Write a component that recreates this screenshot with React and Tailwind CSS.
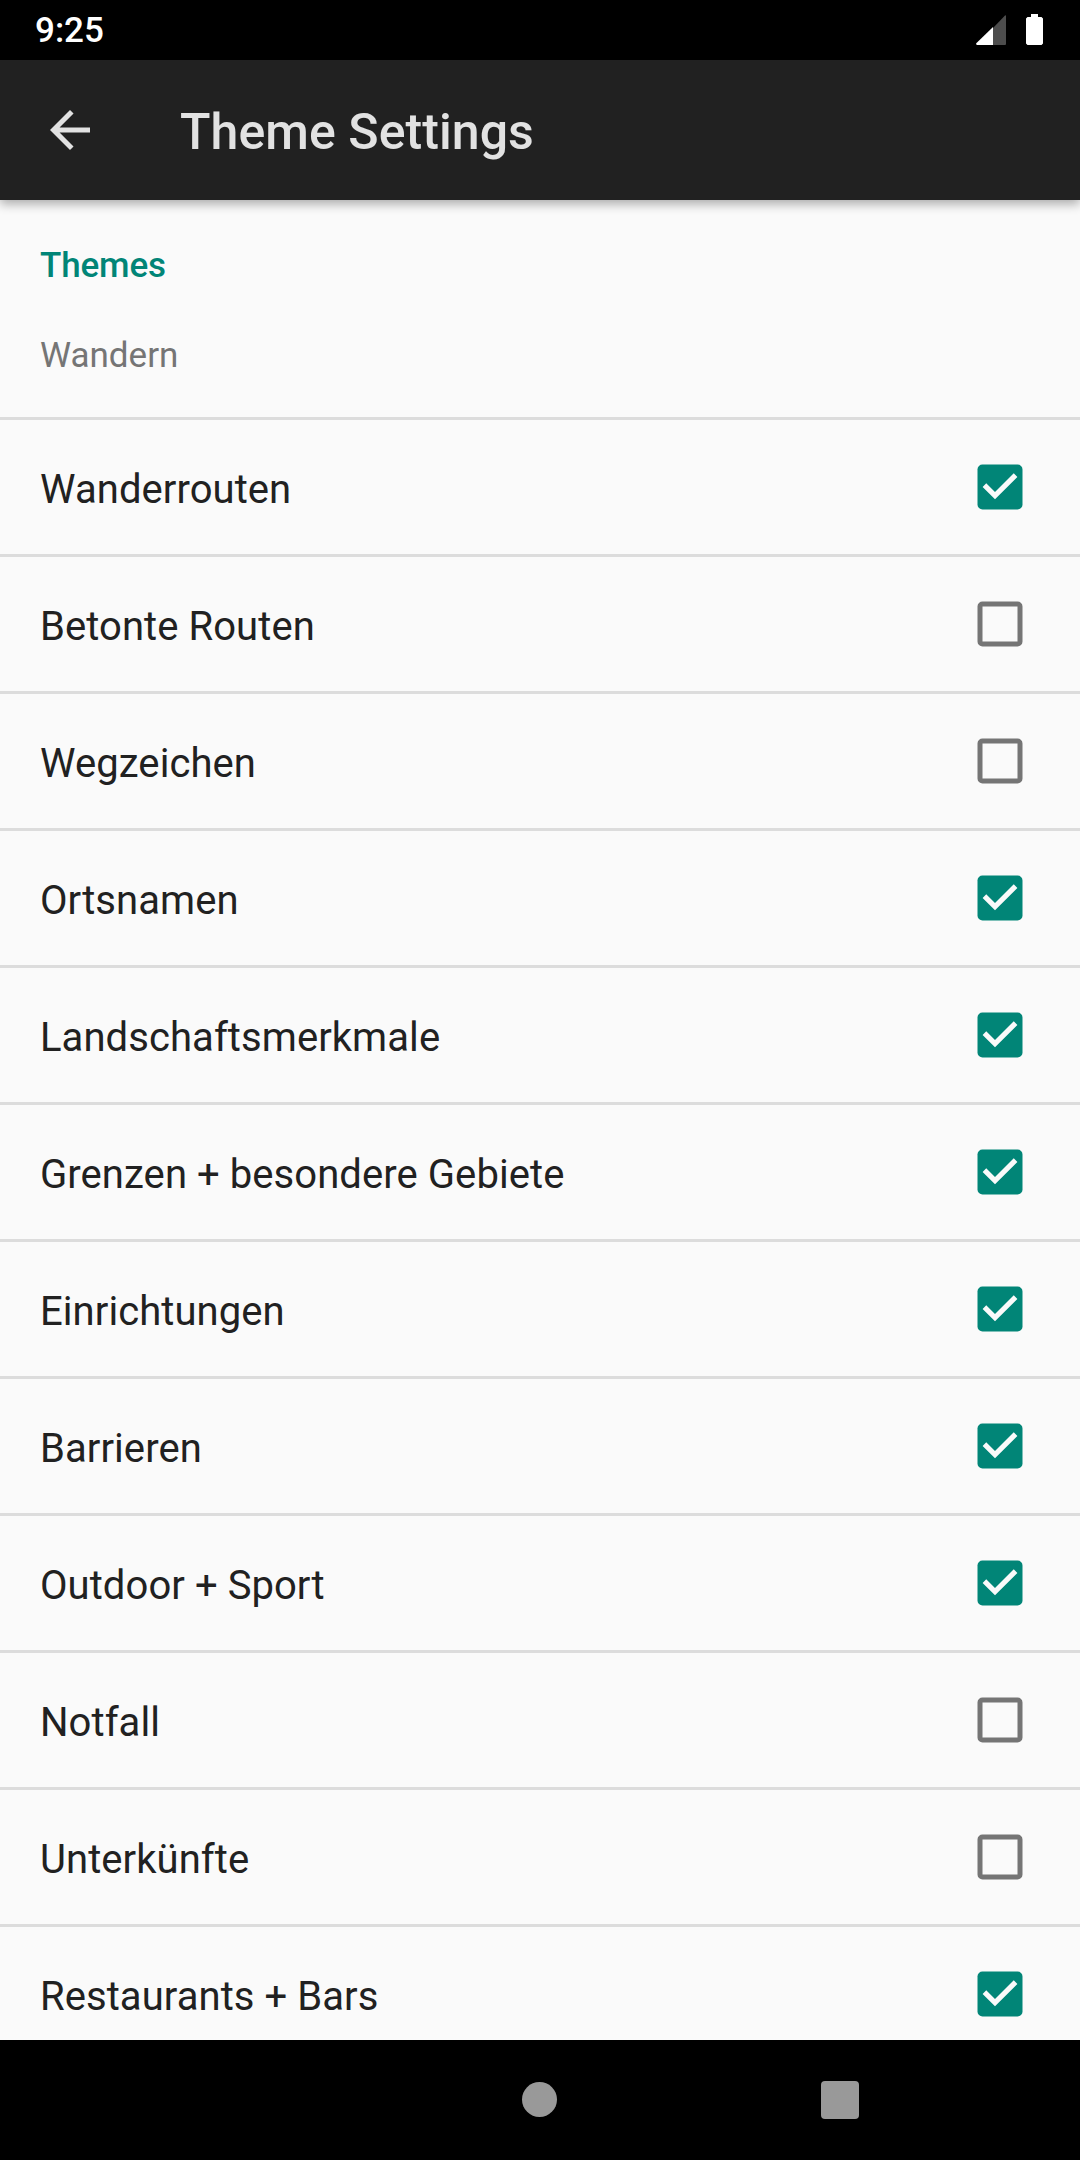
const items = [
  ["Wanderrouten", true],
  ["Betonte Routen", false],
  ["Wegzeichen", false],
  ["Ortsnamen", true],
  ["Landschaftsmerkmale", true],
  ["Grenzen + besondere Gebiete", true],
  ["Einrichtungen", true],
  ["Barrieren", true],
  ["Outdoor + Sport", true],
  ["Notfall", false],
  ["Unterkünfte", false],
  ["Restaurants + Bars", true],
];

function Checkbox({ checked }) {
  return (
    <svg viewBox="0 0 24 24" className="size-[60px] shrink-0" role="checkbox" aria-checked={checked}>
      {checked ? (
        <>
          <rect x="3" y="3" width="18" height="18" rx="2" fill="#018577" />
          <path d="M10 16.900 5.050 11.950l1.450-1.450L10 14l7.500-7.500L18.950 7.950z" fill="#fafafa" />
        </>
      ) : (
        <rect x="4" y="4" width="16" height="16" rx="1" fill="none" stroke="#757575" strokeWidth="2" />
      )}
    </svg>
  );
}

function StatusBar() {
  return (
    <div className="flex h-[60px] shrink-0 items-center justify-between bg-black pl-[35px] pr-[37px] text-white">
      <span className="pt-0.5 text-[35px] font-medium leading-[60px]">9:25</span>
      <div className="flex h-full items-start gap-5 pt-3.5">
        <svg viewBox="0 0 30 31" className="h-[31px] w-[30px]">
          <path d="M17 14 29 1.5q1-.8 1 .5v28q0 1-1 1H17z" fill="#4d4d4d" />
          <path d="M17 13v18H1q-1.5-.8-.5-2z" fill="#fff" />
        </svg>
        <svg viewBox="0 0 17 31" className="h-[31px] w-[17px]">
          <path d="M5 0h7v3h3.5L17 4.500v25L15.500 31h-14L0 29.500v-25L1.500 3H5z" fill="#fff" />
        </svg>
      </div>
    </div>
  );
}

export default function App() {
  return (
    <div className="flex h-[2160px] w-[1080px] flex-col overflow-hidden bg-[#fafafa] font-['Roboto',sans-serif]">
      <StatusBar />
      <header className="z-10 flex h-[140px] shrink-0 items-center gap-20 bg-[#212121] pl-10 text-[#e2e2e2] shadow-[0_4px_10px_rgba(0,0,0,0.32)]">
        <svg viewBox="0 0 24 24" className="size-[60px]">
          <path d="M20 11H7.830l5.590-5.590L12 4l-8 8 8 8 1.410-1.410L7.830 13H20z" fill="currentColor" />
        </svg>
        <h1 className="pt-1 text-[50px] font-medium leading-[60px] tracking-[0.08px]">Theme Settings</h1>
      </header>
      <main className="flex min-h-0 flex-1 flex-col overflow-hidden">
        <section className="h-[220px] shrink-0 border-b-3 border-[#dcdcdc] px-10 pt-[46px]">
          <h2 className="text-[35px] font-medium leading-10 tracking-[-0.15px] text-[#018577]">Themes</h2>
          <p className="mt-[50px] text-[35px] leading-10 text-[#757575]">Wandern</p>
        </section>
        {items.map(([label, checked]) => (
          <div
            key={label}
            className="flex h-[137px] shrink-0 items-center justify-between border-b-3 border-[#dcdcdc] pl-10 pr-[50px]"
          >
            <span className="pt-1.5 text-[40px] leading-[50px] tracking-[0.07px] text-[#212121]">{label}</span>
            <Checkbox checked={checked} />
          </div>
        ))}
      </main>
      <nav className="grid h-[120px] shrink-0 grid-cols-[522px_35px_264px_38px_1fr] items-center bg-black">
        <span />
        <span className="mb-px size-[35px] rounded-full bg-[#999]" />
        <span />
        <span className="size-[38px] rounded-[4px] bg-[#999]" />
        <span />
      </nav>
    </div>
  );
}
